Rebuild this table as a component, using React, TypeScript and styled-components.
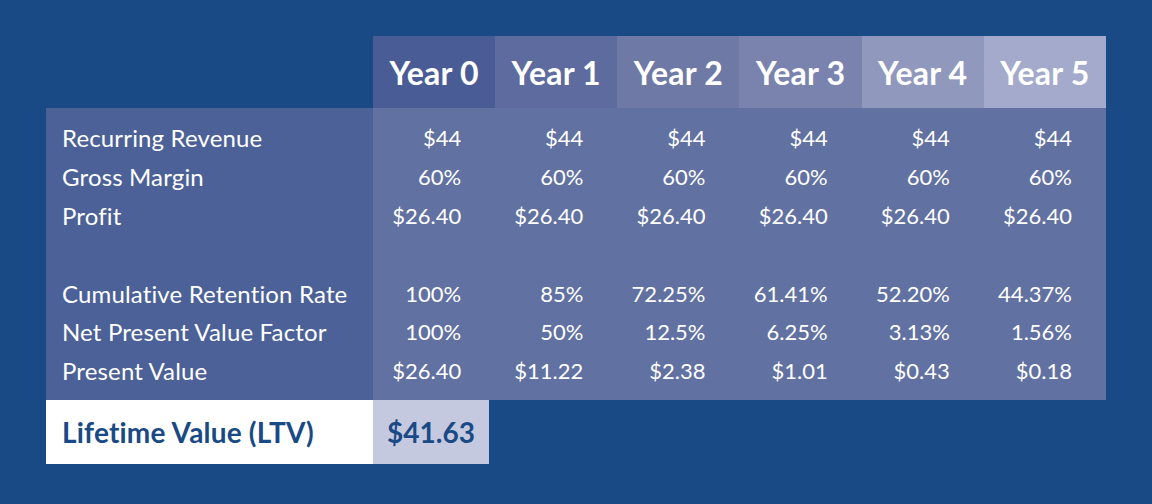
import React from "react";
import styled, { createGlobalStyle } from "styled-components";

const GlobalStyle = createGlobalStyle`
  html, body {
    margin: 0;
    padding: 0;
    background: #1a4a85;
  }
  body {
    font-family: Lato, "Open Sans", sans-serif;
  }
`;

const headerShades = ["#4a5c95", "#5d6b9e", "#6e79a6", "#7a83ad", "#9198bd", "#a3aacb"];

const years = [0, 1, 2, 3, 4, 5];

const labels = [
  "Recurring Revenue",
  "Gross Margin",
  "Profit",
  "",
  "Cumulative Retention Rate",
  "Net Present Value Factor",
  "Present Value",
];

const values: string[][] = [
  ["$44", "60%", "$26.40", "", "100%", "100%", "$26.40"],
  ["$44", "60%", "$26.40", "", "85%", "50%", "$11.22"],
  ["$44", "60%", "$26.40", "", "72.25%", "12.5%", "$2.38"],
  ["$44", "60%", "$26.40", "", "61.41%", "6.25%", "$1.01"],
  ["$44", "60%", "$26.40", "", "52.20%", "3.13%", "$0.43"],
  ["$44", "60%", "$26.40", "", "44.37%", "1.56%", "$0.18"],
];

const Page = styled.div`
  width: 1152px;
  height: 504px;
  box-sizing: border-box;
  padding: 36px 46px 0 46px;
  background: #1a4a85;
  color: #ffffff;
`;

const Table = styled.div`
  display: grid;
  grid-template-columns: 327px repeat(6, 1fr);
  width: 1060px;
`;

const Blank = styled.div`
  height: 72px;
`;

const HeaderCell = styled.div<{ $shade: string }>`
  height: 72px;
  display: flex;
  align-items: center;
  justify-content: center;
  background: ${(p) => p.$shade};
  font-size: 32px;
  font-weight: 700;
  letter-spacing: 0.2px;
`;

const Column = styled.div<{ $label?: boolean }>`
  display: flex;
  flex-direction: column;
  padding: 11px 0 9px;
  background: ${(p) => (p.$label ? "#4b6197" : "#6171a1")};
  align-items: ${(p) => (p.$label ? "flex-start" : "flex-end")};
  padding-left: ${(p) => (p.$label ? "16px" : "0")};
  padding-right: ${(p) => (p.$label ? "0" : "34px")};
  font-size: ${(p) => (p.$label ? "24px" : "22px")};
  letter-spacing: ${(p) => (p.$label ? "0.15px" : "0")};
`;

const Cell = styled.div`
  height: 38.9px;
  line-height: 38.9px;
  white-space: nowrap;
`;

const Footer = styled.div`
  display: flex;
  height: 64px;
`;

const FooterLabel = styled.div`
  width: 311px;
  padding-left: 16px;
  display: flex;
  align-items: center;
  background: #ffffff;
  color: #1a4a85;
  font-size: 28px;
  font-weight: 700;
  letter-spacing: 0.2px;
`;

const FooterValue = styled.div`
  width: 116px;
  display: flex;
  align-items: center;
  justify-content: center;
  background: #c5c9df;
  color: #1a4a85;
  font-size: 28px;
  font-weight: 700;
`;

export default function App() {
  return (
    <Page>
      <GlobalStyle />
      <Table>
        <Blank />
        {years.map((y) => (
          <HeaderCell key={y} $shade={headerShades[y]}>
            Year {y}
          </HeaderCell>
        ))}
        <Column $label>
          {labels.map((l, i) => (
            <Cell key={i}>{l}</Cell>
          ))}
        </Column>
        {values.map((col, y) => (
          <Column key={y}>
            {col.map((v, i) => (
              <Cell key={i}>{v}</Cell>
            ))}
          </Column>
        ))}
      </Table>
      <Footer>
        <FooterLabel>Lifetime Value (LTV)</FooterLabel>
        <FooterValue>$41.63</FooterValue>
      </Footer>
    </Page>
  );
}
